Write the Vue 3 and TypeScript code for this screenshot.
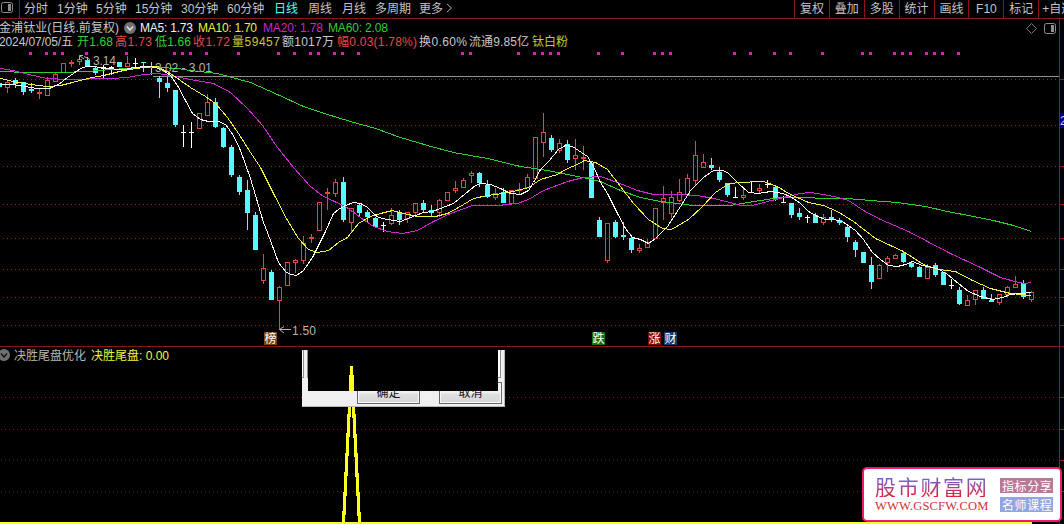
<script setup lang="ts">
type Kind = 'r' | 'c' | 'w'
// kind, high, body top, body bottom, low
type Candle = [Kind, number, number, number, number]

const periods = [
  { label: '分时', width: 33 },
  { label: '1分钟', width: 39 },
  { label: '5分钟', width: 39 },
  { label: '15分钟', width: 46 },
  { label: '30分钟', width: 46 },
  { label: '60分钟', width: 47 },
  { label: '日线', width: 34, active: true },
  { label: '周线', width: 34 },
  { label: '月线', width: 33 },
  { label: '多周期', width: 44 },
  { label: '更多', width: 27 },
]
const tools = ['复权', '叠加', '多股', '统计', '画线', 'F10', '标记']

const candles: Candle[] = [
  ['r', 81, 82, 88, 93], ['c', 78, 80, 84, 88], ['c', 82, 82, 92, 95], ['c', 83, 89, 91, 93],
  ['r', 89, 92, 94, 99], ['r', 77, 80, 96, 96], ['r', 72, 74, 82, 82], ['r', 63, 63, 73, 73],
  ['r', 60, 62, 64, 67], ['r', 57, 59, 62, 65], ['c', 57, 60, 67, 67], ['c', 66, 68, 73, 75],
  ['w', 65, 68, 69, 78], ['w', 66, 67, 68, 75], ['c', 62, 62, 67, 67], ['r', 56, 63, 67, 67],
  ['w', 58, 63, 64, 67], ['c', 62, 62, 63, 72], ['c', 62, 66, 67, 75], ['c', 76, 78, 82, 98],
  ['c', 77, 83, 88, 92], ['c', 90, 90, 125, 127], ['w', 125, 132, 133, 147], ['w', 122, 132, 133, 148],
  ['r', 113, 113, 129, 129], ['r', 94, 102, 116, 116], ['c', 98, 102, 127, 128], ['c', 127, 128, 147, 148],
  ['c', 145, 147, 175, 177], ['c', 175, 177, 192, 195], ['c', 180, 190, 213, 230], ['c', 212, 215, 250, 250],
  ['r', 254, 268, 281, 284], ['c', 270, 272, 300, 300], ['r', 286, 287, 301, 329], ['r', 262, 262, 286, 286],
  ['r', 259, 260, 263, 273], ['r', 236, 243, 261, 264], ['r', 234, 237, 239, 243], ['r', 202, 202, 231, 231],
  ['r', 188, 192, 194, 210], ['r', 179, 182, 194, 197], ['c', 177, 182, 220, 222], ['r', 208, 208, 223, 233],
  ['c', 203, 205, 213, 217], ['c', 210, 212, 217, 223], ['c', 217, 218, 227, 228], ['w', 222, 225, 226, 232],
  ['r', 208, 215, 224, 225], ['c', 210, 212, 220, 225], ['r', 212, 212, 219, 223], ['r', 203, 203, 213, 216],
  ['c', 200, 203, 210, 212], ['c', 205, 210, 213, 217], ['r', 199, 200, 213, 217], ['r', 192, 192, 201, 201],
  ['r', 181, 188, 191, 193], ['r', 178, 180, 188, 188], ['r', 171, 173, 176, 183], ['c', 172, 173, 183, 187],
  ['c', 180, 185, 197, 198], ['r', 188, 193, 198, 200], ['c', 188, 192, 203, 203], ['r', 190, 190, 204, 204],
  ['r', 183, 189, 191, 194], ['r', 174, 177, 188, 188], ['r', 137, 137, 179, 179], ['r', 113, 132, 143, 157],
  ['c', 135, 138, 150, 152], ['r', 139, 143, 151, 153], ['c', 140, 144, 160, 163], ['r', 139, 155, 159, 170],
  ['r', 146, 157, 159, 170], ['c', 161, 163, 198, 198], ['c', 217, 220, 237, 237], ['r', 223, 223, 261, 263],
  ['c', 220, 222, 237, 238], ['c', 222, 235, 237, 240], ['c', 237, 238, 250, 253], ['r', 244, 248, 251, 253],
  ['r', 239, 242, 248, 248], ['r', 208, 208, 239, 239], ['r', 186, 198, 203, 220], ['r', 191, 197, 214, 218],
  ['r', 179, 192, 201, 202], ['r', 174, 178, 195, 195], ['r', 141, 155, 181, 185], ['r', 154, 162, 168, 168],
  ['c', 158, 165, 168, 170], ['c', 167, 172, 180, 182], ['c', 183, 183, 195, 197], ['w', 187, 197, 198, 198],
  ['r', 189, 195, 198, 200], ['w', 182, 192, 193, 193], ['r', 184, 188, 191, 194], ['w', 180, 184, 185, 188],
  ['c', 185, 187, 198, 201], ['w', 196, 202, 203, 203], ['c', 203, 203, 215, 218], ['c', 208, 213, 217, 220],
  ['w', 215, 217, 218, 223], ['c', 213, 215, 223, 223], ['r', 214, 217, 223, 225], ['c', 210, 217, 219, 222],
  ['c', 218, 220, 223, 225], ['c', 225, 227, 237, 242], ['c', 240, 242, 250, 257], ['c', 252, 252, 263, 263],
  ['c', 257, 265, 282, 289], ['r', 264, 265, 279, 279], ['r', 256, 258, 263, 272], ['r', 254, 255, 259, 259],
  ['c', 251, 253, 262, 263], ['c', 261, 263, 267, 268], ['c', 266, 267, 277, 277], ['r', 264, 267, 279, 279],
  ['c', 263, 265, 275, 277], ['c', 272, 272, 285, 285], ['w', 279, 285, 286, 289], ['c', 287, 290, 304, 305],
  ['r', 295, 300, 306, 306], ['r', 290, 290, 300, 305], ['c', 287, 290, 299, 299], ['c', 294, 300, 302, 302],
  ['r', 294, 294, 303, 305], ['r', 286, 287, 295, 297], ['r', 276, 284, 288, 288], ['c', 280, 283, 297, 299],
  ['r', 291, 292, 300, 302],
]
const palette: Record<Kind, string> = { r: '#e84444', c: '#54fcfc', w: '#ffffff' }
const sticks = candles.map(([kind, high, top, bottom, low], i) => ({
  x: 7 + i * 8,
  color: palette[kind],
  hollow: kind === 'r' && bottom - top > 2,
  high, top, bottom, low,
}))

const averages = [
  { color: '#30d030', points: '0,71 27,72 60,72 87,71 110,69 143,67 160,67 177,68 190,70 217,73 250,82 277,94 303,106 327,114 350,121 375,128 400,137 427,145 453,152 487,158 520,166 547,170 567,174 587,178 600,181 620,190 640,197 660,201 693,205 730,205 753,201 780,197 847,198 870,200 897,202 925,206 947,211 973,216 993,220 1013,225 1031,231' },
  { color: '#d028d0', points: '0,68 13,70 28,74 47,78 67,79 110,78 127,77 143,74 157,73 170,75 190,79 213,83 230,92 247,108 262,125 277,147 293,167 310,186 323,196 345,206 360,217 373,226 387,231 402,233 417,230 433,221 450,213 472,205 497,205 517,203 528,199 543,190 567,181 583,177 600,176 617,182 637,190 653,194 677,194 697,195 713,198 730,202 740,205 752,205 767,201 783,197 800,193 810,192 823,194 838,197 848,200 863,210 880,219 908,231 927,241 950,253 980,267 1000,277 1018,282 1025,283 1031,282' },
  { color: '#f4f440', points: '0,78 13,81 30,84 47,86 60,85 72,82 87,78 103,75 123,70 143,67 157,66 170,73 190,87 205,96 215,103 227,117 238,133 250,152 260,167 273,193 287,220 298,238 308,249 317,252 328,250 338,242 347,237 358,223 370,216 380,213 392,210 403,213 417,216 435,216 447,213 458,207 473,198 487,195 503,193 517,190 528,187 540,179 557,174 567,168 577,164 584,160 595,162 607,169 620,186 633,203 648,219 662,228 671,229 688,219 702,206 715,192 727,184 737,182 763,181 777,186 788,193 808,202 823,205 837,211 853,221 875,238 890,245 903,251 923,264 938,269 955,271 972,280 990,288 1010,293 1031,295' },
  { color: '#ffffff', points: '0,84 10,84 20,85 30,87 37,88 49,88 58,84 67,77 73,73 80,68 86,66 92,66 110,68 117,69 125,69 133,67 147,66 155,67 163,70 170,75 177,85 185,100 192,113 200,119 208,121 218,121 225,124 233,135 240,150 250,178 263,222 267,232 278,262 285,271 290,274 296,275 303,270 312,257 325,231 333,213 338,209 345,205 353,202 360,203 367,207 373,213 378,217 387,219 400,221 410,217 423,212 432,211 440,208 453,203 465,193 475,185 480,183 490,184 500,188 510,193 520,194 528,190 533,182 540,169 548,161 558,149 565,145 572,146 578,150 587,156 593,166 600,182 607,193 617,213 625,228 632,237 640,239 648,243 655,238 667,226 680,206 690,190 703,177 713,170 722,170 727,172 738,183 748,192 758,193 770,191 782,193 790,196 800,203 808,211 817,216 825,219 833,219 842,221 855,230 863,239 872,252 880,259 888,265 897,266 905,264 912,261 922,265 937,268 947,274 958,283 968,291 980,296 992,299 1002,297 1010,294 1020,293 1031,292' },
]

const markers = [
  30, 46, 54, 62, 86, 126, 174, 182, 190, 206, 238, 278, 294, 310, 318, 334, 342, 358, 462, 470, 518,
  534, 542, 550, 558, 598, 622, 654, 662, 670, 734, 750, 774, 790, 822, 862, 870, 894, 902, 910, 926,
  934, 942, 958,
]
const priceGrid = [79, 125, 166, 204, 238, 269, 297, 325]
const studyGrid = [397, 429, 460, 491]

interface Label { text: string; x: number; y: number; width: number; color: string }
const labels: Label[] = [
  { text: '金浦钛业(日线.前复权)', x: -1, y: 32, width: 120, color: '#c8c8c8' },
  { text: 'MA5: 1.73', x: 140, y: 32, width: 53, color: '#f4f4f4' },
  { text: 'MA10: 1.70', x: 198, y: 32, width: 59, color: '#f0f040' },
  { text: 'MA20: 1.78', x: 263, y: 32, width: 60, color: '#c828c8' },
  { text: 'MA60: 2.08', x: 328, y: 32, width: 60, color: '#34cc34' },
  { text: '2024/07/05/五', x: -1, y: 46, width: 74, color: '#c8c8c8' },
  { text: '开1.68', x: 77, y: 46, width: 36, color: '#34d034' },
  { text: '高1.73', x: 115, y: 46, width: 37, color: '#e84848' },
  { text: '低1.66', x: 155, y: 46, width: 36, color: '#34d034' },
  { text: '收1.72', x: 193, y: 46, width: 37, color: '#e84848' },
  { text: '量59457', x: 232, y: 46, width: 48, color: '#c8c832' },
  { text: '额1017万', x: 282, y: 46, width: 52, color: '#c8c8c8' },
  { text: '幅0.03(1.78%)', x: 337, y: 46, width: 80, color: '#e84848' },
  { text: '换0.60%', x: 419, y: 46, width: 48, color: '#c8c8c8' },
  { text: '流通9.85亿', x: 469, y: 46, width: 60, color: '#c8c8c8' },
  { text: '钛白粉', x: 532, y: 46, width: 36, color: '#c8c832' },
  { text: '3.14', x: 93, y: 65, width: 23, color: '#b4b4b4' },
  { text: '3.02 - 3.01', x: 155, y: 72, width: 57, color: '#b4b4b4' },
  { text: '1.50', x: 292, y: 335, width: 24, color: '#b4b4b4' },
  { text: '决胜尾盘优化', x: 14, y: 359.5, width: 72, color: '#b8b8b8' },
  { text: '决胜尾盘: 0.00', x: 91, y: 359.5, width: 78, color: '#f4f440' },
]
const tags = [
  { text: '榜', x: 264, color: '#7c4412' },
  { text: '跌', x: 592, color: '#146c14' },
  { text: '涨', x: 648, color: '#780a0a' },
  { text: '财', x: 664, color: '#123c64' },
]
</script>

<template>
  <main class="terminal">
    <header class="toolbar">
      <span class="panel-toggle">
        <svg width="14" height="12" viewBox="0 0 14 12">
          <rect x="1.5" y="0.5" width="11" height="10" rx="2" fill="none" stroke="#909090" />
          <rect x="8" y="2" width="3" height="7" fill="#909090" />
        </svg>
      </span>
      <nav class="periods">
        <span v-for="p in periods" :key="p.label" class="period" :class="{ active: p.active }" :style="{ width: p.width + 'px' }">{{ p.label }}</span>
        <svg class="more" width="7" height="10" viewBox="0 0 7 10"><path d="M1 1L5.5 5L1 9" fill="none" stroke="#b0b0b0" /></svg>
      </nav>
      <div class="tools">
        <span v-for="t in tools" :key="t" class="tool">{{ t }}</span>
        <span class="tool last">+自选</span>
      </div>
    </header>

    <svg class="chart" width="1064" height="505" viewBox="0 19 1064 505">
      <g shape-rendering="crispEdges">
        <line v-for="y in priceGrid" :key="'p' + y" x1="3" :y1="y + 0.5" x2="1059" :y2="y + 0.5" stroke="#b01818" stroke-dasharray="1 3" />
        <line v-for="y in studyGrid" :key="'s' + y" x1="1" :y1="y + 0.5" x2="1059" :y2="y + 0.5" stroke="#801818" stroke-dasharray="1 3" />
        <line v-for="y in [...priceGrid, ...studyGrid]" :key="'t' + y" x1="1060" :y1="y + 0.5" x2="1064" :y2="y + 0.5" stroke="#a01414" />
        <line x1="153" y1="76.5" x2="1059" y2="76.5" stroke="#909090" />
        <line x1="0" y1="346.5" x2="1064" y2="346.5" stroke="#901414" />
        <line x1="1059.5" y1="19" x2="1059.5" y2="524" stroke="#a01414" />
        <rect v-for="x in markers" :key="x" :x="x - 1" y="52" width="3" height="3" fill="#d024c4" />
        <rect x="0" y="83" width="2" height="4" fill="#54fcfc" />
        <g v-for="s in sticks" :key="s.x" :fill="s.color">
          <rect :x="s.x" :y="s.high" width="1" :height="s.hollow ? s.top - s.high : s.low - s.high" />
          <rect v-if="s.hollow" :x="s.x" :y="s.bottom" width="1" :height="s.low - s.bottom" />
          <rect v-if="s.hollow" :x="s.x - 1.5" :y="s.top + 0.5" width="4" :height="s.bottom - s.top - 1" fill="none" :stroke="s.color" />
          <rect v-else :x="s.x - 2" :y="s.top" width="5" :height="s.bottom - s.top" />
        </g>
        <polyline v-for="a in averages" :key="a.color" :points="a.points" :stroke="a.color" transform="translate(0.5 0.5)" fill="none" />
        <path d="M343.5 523L351.5 367L359.5 523" fill="none" stroke="#ffff20" stroke-width="3.2" stroke-linejoin="bevel" />
        <rect x="350" y="366" width="3" height="11" fill="#ffff20" />
        <rect x="0" y="522" width="1032" height="2" fill="#ffff20" />
        <rect x="1060" y="113" width="4" height="15" fill="#000084" />
      </g>

      <text v-for="l in labels" :key="l.text" :x="l.x" :y="l.y" :textLength="l.width" :fill="l.color">{{ l.text }}</text>
      <text x="1060" y="125" fill="#d0d0ff">2</text>
      <g v-for="t in tags" :key="t.text">
        <rect :x="t.x" y="332" width="13" height="13" :fill="t.color" />
        <text :x="t.x + 0.5" y="343" fill="#fff">{{ t.text }}</text>
      </g>

      <g fill="none" stroke="#b4b4b4">
        <path d="M79.5 60V55.5H83M80 56L84 59M84 56.5L90 59.5" />
        <path d="M279.5 329.5H291M284 326.5L279.5 329.5L284 333" />
      </g>
      <circle cx="130" cy="28" r="6" fill="#707070" />
      <path d="M127 26.5L130 30L133 26.5" fill="none" stroke="#e0e0e0" stroke-width="1.5" />
      <circle cx="4" cy="355" r="6" fill="#707070" />
      <path d="M1 353.5L4 357L7 353.5" fill="none" stroke="#181818" stroke-width="1.5" />
      <path d="M1031.5 23.5L1036.5 28.5L1031.5 33.5L1026.5 28.5Z" fill="none" stroke="#787878" />
      <rect x="1044.5" y="23.5" width="11" height="10" rx="2" fill="none" stroke="#909090" />
      <rect x="1051" y="25" width="3" height="7" fill="#909090" />
    </svg>

    <section class="dialog">
      <div class="rail left"></div>
      <div class="rail right"></div>
      <footer class="actions">
        <button class="btn">确定</button>
        <button class="btn">取消</button>
      </footer>
    </section>

    <aside class="brand">
      <div class="site">
        <strong class="name">股市财富网</strong>
        <span class="url">WWW.GSCFW.COM</span>
      </div>
      <div class="badges">
        <span class="badge rose">指标分享</span>
        <span class="badge blue">名师课程</span>
      </div>
    </aside>
  </main>
</template>

<style>
body { margin: 0; background: #000; overflow: hidden; }
</style>

<style scoped>
.terminal {
  position: relative;
  width: 1064px;
  height: 524px;
  overflow: hidden;
  background: #000;
  font: 12px/16px "Liberation Sans", "Noto Sans CJK SC", sans-serif;
}
.toolbar {
  display: flex;
  box-sizing: border-box;
  height: 19px;
  border-bottom: 1px solid #901414;
  color: #c4c4c4;
  line-height: 18px;
  white-space: nowrap;
}
.panel-toggle {
  box-sizing: border-box;
  width: 20px;
  height: 18px;
  padding-top: 2px;
  border-right: 1px solid #901414;
}
.panel-toggle svg { display: block; }
.periods { display: flex; flex: 1; padding-left: 4px; }
.period { flex: none; }
.period.active { color: #54fcfc; }
.more { margin-top: 3px; }
.tools { display: flex; width: 270px; overflow: hidden; }
.tool {
  box-sizing: border-box;
  flex: none;
  width: 34.9px;
  height: 18px;
  border-left: 1px solid #901414;
  text-align: center;
}
.tool.last { padding-left: 3px; text-align: left; }
.chart { display: block; }
.chart text { white-space: pre; }

.dialog {
  position: absolute;
  left: 302px;
  top: 350px;
  width: 203px;
  height: 57px;
  box-sizing: border-box;
  background: #f0f0f0;
  border-right: 1px solid #b8b8b8;
  border-bottom: 1px solid #b8b8b8;
  clip-path: polygon(0 0, 6px 0, 6px 41px, 196px 41px, 196px 0, 203px 0, 203px 57px, 0 57px);
}
.rail {
  position: absolute;
  top: 0;
  height: 28px;
  box-sizing: border-box;
  border: solid #8c8c8c;
  border-width: 0 1px 1px;
  background: #fff;
}
.rail.left { left: -4px; width: 6px; box-shadow: 3px 0 0 #f0f0f0, 4px 0 0 #8c8c8c; }
.rail.right { right: 3px; width: 5px; }
.actions {
  display: flex;
  gap: 19px;
  padding: 32px 0 0 55px;
}
.btn {
  flex: none;
  box-sizing: border-box;
  width: 63px;
  height: 22px;
  padding: 1px 0 0;
  border: 1px solid #686868;
  box-shadow: inset 0 0 0 1px #f8f8f8;
  background: linear-gradient(#f0f0f0 50%, #dedede 55%, #d8d8d8);
  color: #101020;
  font: 12px/19px "Liberation Sans", "Noto Sans CJK SC", sans-serif;
}

.brand {
  position: absolute;
  left: 862px;
  top: 467px;
  width: 200px;
  height: 55px;
  box-sizing: border-box;
  display: flex;
  justify-content: space-between;
  padding: 7px 7px 0 11px;
  border: 2px solid #f0186c;
  border-radius: 5px;
  background: #fff;
}
.site { display: flex; flex-direction: column; }
.name {
  height: 21px;
  font: 400 21px/21px "Noto Sans CJK SC", sans-serif;
  letter-spacing: 1.7px;
  color: transparent;
  background: linear-gradient(#6c64d4 10%, #a04898 50%, #d82440 90%);
  background-clip: text;
}
.url {
  margin-top: 2px;
  font: 12.5px/14px "Liberation Serif", serif;
  letter-spacing: 0.2px;
  color: #cc3440;
}
.badges { display: flex; flex-direction: column; gap: 4px; padding-top: 2px; }
.badge {
  width: 53px;
  height: 15px;
  font: 12px/15px "Noto Sans CJK SC", sans-serif;
  letter-spacing: 0.6px;
  text-indent: 2px;
  white-space: nowrap;
  color: #fff;
}
.badge.rose { background: #b87898; }
.badge.blue { background: #92a4e4; }
</style>
